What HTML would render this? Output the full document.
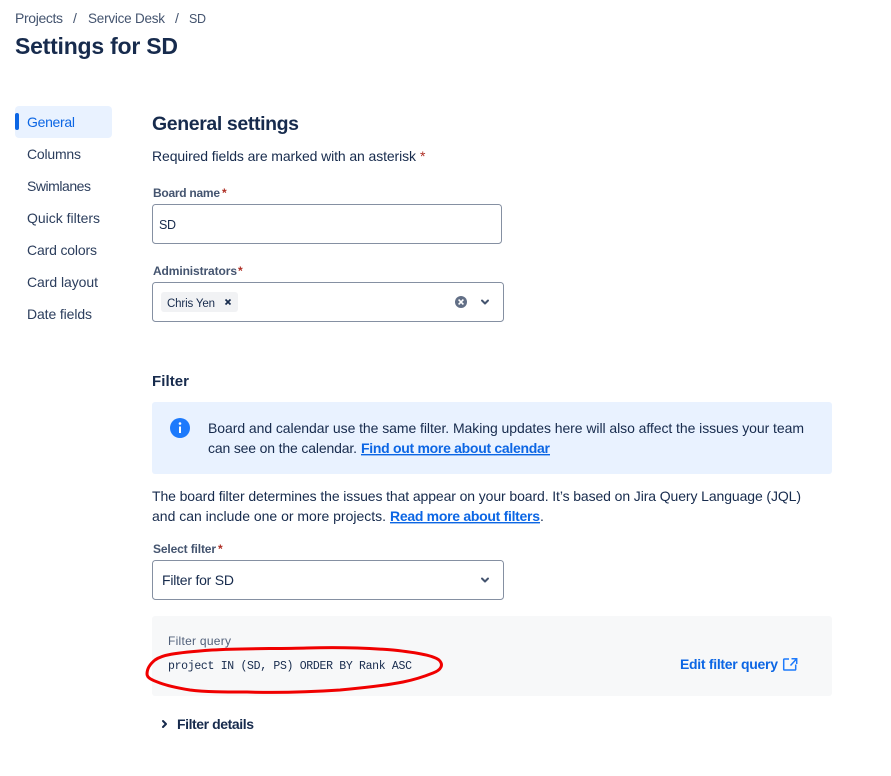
<!DOCTYPE html>
<html lang="en"><head><meta charset="utf-8"><title>Settings for SD</title>
<style>
html,body{margin:0;padding:0;background:#fff;width:891px;height:776px;overflow:hidden}
svg{display:block}
text{font-family:"Liberation Sans",sans-serif;font-size:14px;fill:#172b4d;white-space:pre}
.nav{fill:#2c3e5d}
.crumb{fill:#44546f}
.lab{font-size:12px;font-weight:700;fill:#44546f}
.req{font-size:12px;font-weight:700;fill:#ae2e24}
.link{fill:#0c66e4;text-decoration:underline}
.box{fill:#fff;stroke:#8590a2;stroke-width:1}
</style></head><body>
<svg width="891" height="776" viewBox="0 0 891 776" xmlns="http://www.w3.org/2000/svg">
<text class="crumb" x="15" y="23" textLength="48">Projects</text>
<text class="crumb" x="73" y="23">/</text>
<text class="crumb" x="88" y="23" textLength="77" style="font-size:13.500px">Service Desk</text>
<text class="crumb" x="175" y="23">/</text>
<text class="crumb" x="189" y="23" textLength="17" style="font-size:12.500px">SD</text>
<text x="15" y="54" textLength="163" style="font-size:23px;font-weight:700">Settings for SD</text>

<rect x="15" y="106" width="97" height="32" rx="4" fill="#e9f2ff"/>
<rect x="15" y="113" width="4" height="17" rx="2" fill="#0c66e4"/>
<text x="27" y="127" textLength="48" style="fill:#0c66e4">General</text>
<text class="nav" x="27" y="159" textLength="54">Columns</text>
<text class="nav" x="27" y="191" textLength="64">Swimlanes</text>
<text class="nav" x="27" y="223" textLength="73">Quick filters</text>
<text class="nav" x="27" y="255" textLength="70">Card colors</text>
<text class="nav" x="27" y="287" textLength="71">Card layout</text>
<text class="nav" x="27" y="319" textLength="65">Date fields</text>

<text x="152" y="130" textLength="147" style="font-size:19.500px;font-weight:700">General settings</text>
<text x="152" y="161" textLength="264">Required fields are marked with an asterisk</text>
<text x="420" y="161" style="fill:#ae2e24">*</text>

<text class="lab" x="153" y="197" textLength="67">Board name</text>
<text class="req" x="222" y="197">*</text>
<rect class="box" x="152.5" y="204.5" width="349" height="39" rx="3"/>
<text x="159" y="229" textLength="17" style="font-size:12.500px">SD</text>

<text class="lab" x="153" y="275" textLength="84">Administrators</text>
<text class="req" x="238" y="275">*</text>
<rect class="box" x="152.5" y="282.5" width="351" height="39" rx="3"/>
<rect x="161" y="292" width="77" height="20" rx="3" fill="#f1f2f4"/>
<text x="167" y="307" textLength="48" style="font-size:11.500px">Chris Yen</text>
<path d="M225.500 299.500l5 5m0-5l-5 5" stroke="#172b4d" stroke-width="1.700" fill="none"/>
<circle cx="461" cy="302" r="6" fill="#626f86"/>
<path d="M458.600 299.600l4.800 4.800m0-4.800l-4.800 4.800" stroke="#fff" stroke-width="1.600" fill="none"/>
<path d="M482 300.500l3 3 3-3" stroke="#44546f" stroke-width="2" fill="none" stroke-linecap="round" stroke-linejoin="round"/>

<text x="152" y="386" textLength="37" style="font-size:15px;font-weight:700">Filter</text>
<rect x="152" y="402" width="680" height="72" rx="3" fill="#e9f2ff"/>
<circle cx="180" cy="428" r="10" fill="#1d7afc"/>
<rect x="179" y="426.500" width="2" height="6.500" fill="#fff"/>
<circle cx="180" cy="423.500" r="1.300" fill="#fff"/>
<text x="208" y="433" textLength="596">Board and calendar use the same filter. Making updates here will also affect the issues your team</text>
<text x="208" y="453" textLength="149">can see on the calendar.</text>
<text class="link" x="361" y="453" textLength="189" style="font-weight:700">Find out more about calendar</text>

<text x="152" y="501" textLength="649">The board filter determines the issues that appear on your board. It’s based on Jira Query Language (JQL)</text>
<text x="152" y="521" textLength="234">and can include one or more projects.</text>
<text class="link" x="390" y="521" textLength="150" style="font-weight:700">Read more about filters</text>
<text x="540" y="521">.</text>

<text class="lab" x="153" y="553" textLength="63">Select filter</text>
<text class="req" x="218" y="553">*</text>
<rect class="box" x="152.500" y="560.500" width="351" height="39" rx="3"/>
<text x="162" y="585" textLength="72">Filter for SD</text>
<path d="M482 578.500l3 3 3-3" stroke="#44546f" stroke-width="2" fill="none" stroke-linecap="round" stroke-linejoin="round"/>

<rect x="152" y="616" width="680" height="80" rx="3" fill="#f7f8f9"/>
<text x="168" y="645" textLength="63" style="font-size:12px;fill:#505f79">Filter query</text>
<text x="168" y="669" textLength="244" style="font-family:'Liberation Mono',monospace;font-size:11.500px;fill:#172b4d">project IN (SD, PS) ORDER BY Rank ASC</text>
<text x="680" y="669" textLength="98" style="font-weight:700;fill:#0c66e4">Edit filter query</text>
<path d="M789 659h-4.500a.8.800 0 0 0-.8.800v9.400a.8.800 0 0 0 .8.800h10.400a.8.800 0 0 0 .8-.8v-4.700" stroke="#1d7afc" stroke-width="1.500" fill="none"/>
<path d="M790.500 665.500l5.500-6m-4.500-.7h5.200v5.200" stroke="#1d7afc" stroke-width="1.500" fill="none"/>

<path d="M163 721l3 3-3 3" stroke="#172b4d" stroke-width="2" fill="none" stroke-linecap="round" stroke-linejoin="round"/>
<text x="177" y="729" textLength="77" style="font-weight:700">Filter details</text>

<path d="M212 650C245 648 275 649 307 648C340 647 368 648 393 650C412 652 433 655 439 660C444 665 441 670 433 673C423 677 413 680 403 682C383 686 362 688 340 690C310 692 278 693 247 692C225 692 205 692 190 690C178 688 168 686 160 683C152 680 147 678 147 674C147 669 150 664 155 660C162 655 172 653 212 650Z" fill="none" stroke="#f00000" stroke-width="3"/>
</svg>
</body></html>
